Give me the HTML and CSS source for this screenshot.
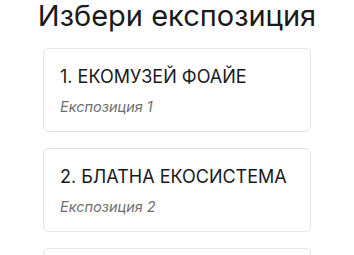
FILE: index.html
```html
<!DOCTYPE html>
<html lang="bg">
<head>
    <meta charset="UTF-8">
    <meta name="viewport" content="width=device-width, initial-scale=1.0">
    <title>Избери експозиция</title>
    <link rel="stylesheet" href="styles.css">
</head>
<body>
    <h1>Избери експозиция</h1>

    <div class="exhibit-list">
        <div class="exhibit">
            <div class="exhibit-title">1. ЕКОМУЗЕЙ ФОАЙЕ</div>
            <div class="exhibit-sub">Експозиция 1</div>
        </div>
        <div class="exhibit">
            <div class="exhibit-title">2. БЛАТНА ЕКОСИСТЕМА</div>
            <div class="exhibit-sub">Експозиция 2</div>
        </div>
        <div class="exhibit">
            <div class="exhibit-title">3. ГОРСКА ЕКОСИСТЕМА</div>
            <div class="exhibit-sub">Експозиция 3</div>
        </div>
    </div>
</body>
</html>
```

FILE: styles.css
```css
body {
    margin: 0;
    background-color: #fff;
    font-family: Inter, "Noto Sans", sans-serif;
    color: #1a1a1a;
}

h1 {
    margin: 0 0 16px;
    font-size: 29px;
    font-weight: 400;
    line-height: 32px;
    text-align: center;
}

.exhibit-list {
    display: flex;
    flex-direction: column;
    gap: 16px;
    padding: 0 43px;
}

.exhibit {
    height: 84px;
    box-sizing: border-box;
    padding: 17px 16px;
    border: 1px solid #e3e3e3;
    border-radius: 6px;
}

.exhibit-title {
    font-size: 18px;
    line-height: 22px;
    margin-bottom: 10px;
}

.exhibit-sub {
    font-size: 14.5px;
    font-style: italic;
    color: #707070;
    line-height: 18px;
}
```
